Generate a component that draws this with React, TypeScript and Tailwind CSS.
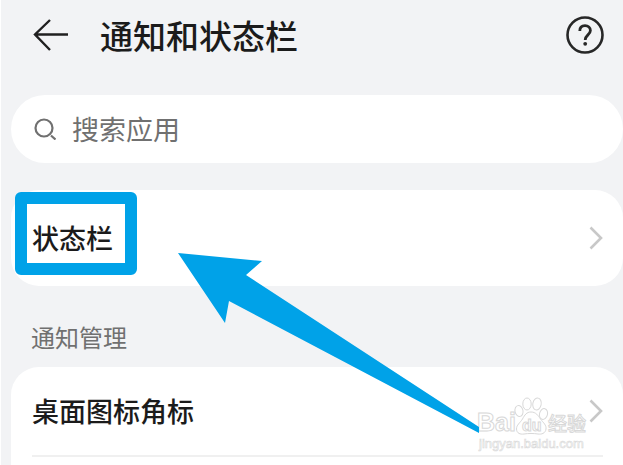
import { useState } from "react";

const rowClass = "flex w-full items-center justify-between text-left text-[27px] leading-9 font-medium text-[#1b1b1b]";

function Chevron() {
  return (
    <svg className="h-6 w-3.5 shrink-0" viewBox="0 0 14 24" fill="none" stroke="#c8c8c8" strokeWidth="2.6" aria-hidden="true">
      <path d="M1.5 1.5 12 12 1.5 22.5" />
    </svg>
  );
}

function Watermark() {
  return (
    <svg
      className="pointer-events-none absolute top-[396px] right-8 h-14 w-[115px] font-['Liberation_Sans','Noto_Sans_CJK_SC',sans-serif]"
      viewBox="0 0 115 56"
      fill="#ffffff"
      stroke="#d8d8d8"
      strokeWidth="1"
      aria-label="Baidu"
    >
      <text x="1" y="35" fontSize="25" fontWeight="700">Bai</text>
      <ellipse cx="43" cy="15" rx="4" ry="5.5" transform="rotate(-12 43 15)" />
      <ellipse cx="51" cy="8" rx="4.2" ry="6" />
      <ellipse cx="61" cy="8" rx="4.2" ry="6" transform="rotate(12 61 8)" />
      <ellipse cx="67.5" cy="18" rx="4" ry="5.5" transform="rotate(14 67.5 18)" />
      <path d="M55 16c5 0 7 3.500 9.500 7 3 4 6 6 5.500 10-.6 4.500-4.500 5.500-8 5-4.500-.7-9.500-.7-14 0-3.500.5-7.400-.5-7.500-5-.1-4 3.500-6 6-10 2.200-4 4-7 8.500-7Z" />
      <text x="46" y="35" fontSize="16" fontWeight="700">du</text>
      <text x="72" y="35" fontSize="19" fontWeight="500">经验</text>
      <text x="3" y="52" fontSize="13" strokeWidth="0.6">jingyan.baidu.com</text>
    </svg>
  );
}

export default function App() {
  const [query, setQuery] = useState("");

  return (
    <div className="relative flex min-h-screen flex-col overflow-hidden border-l border-white bg-[#f2f3f5] pl-2.5 font-['Noto_Sans_CJK_SC',sans-serif]">
      <header className="flex h-[70px] items-center pr-[18px] pl-[22px]">
        <button type="button" aria-label="返回" className="mr-[31px]">
          <svg className="h-8 w-9" viewBox="0 0 36 32" fill="none" stroke="#202020" strokeWidth="2.4" aria-hidden="true">
            <path d="M17 1 2 15.500 17 31M2 15.500h33" />
          </svg>
        </button>
        <h1 className="flex-1 text-[33px] leading-10 font-medium text-[#1b1b1b]">通知和状态栏</h1>
        <button type="button" aria-label="帮助">
          <svg className="size-10" viewBox="0 0 40 40" fill="none" stroke="#272727" strokeWidth="2.6" aria-hidden="true">
            <circle cx="20" cy="20" r="17.5" />
            <path d="M14.800 16c0-3.400 2.100-5.300 5.200-5.300 3.200 0 5.400 1.900 5.400 4.900 0 4.300-5.200 4.400-5.200 9.400" strokeWidth="2.8" />
            <circle cx="20.2" cy="28.8" r="1.900" fill="#272727" stroke="none" />
          </svg>
        </button>
      </header>

      <main className="flex flex-1 flex-col pt-[25px]">
        <label className="flex h-[68px] items-center gap-4 rounded-full bg-white pr-6 pl-[23px]">
          <svg className="size-[22px] shrink-0" viewBox="0 0 22 22" fill="none" stroke="#707070" strokeWidth="2.2" aria-hidden="true">
            <circle cx="10" cy="10" r="8.500" />
            <path d="m17 17.500 4.500 4" />
          </svg>
          <input
            type="text"
            aria-label="搜索应用"
            placeholder="搜索应用"
            value={query}
            onChange={(e) => setQuery(e.target.value)}
            className="h-10 min-w-0 flex-1 text-[27px] outline-none placeholder:text-[#707070]"
          />
        </label>

        <section className="relative mt-[27px] rounded-[28px] bg-white pr-5 pl-[21px]">
          <button type="button" className={`${rowClass} h-24`}>
            状态栏
            <Chevron />
          </button>
          {/* Highlight frame around the row label */}
          <div className="pointer-events-none absolute top-0.5 left-1 h-[83px] w-[122px] rounded-md border-12 border-[#00a2e8]" />
          {/* Pointer arrow */}
          <svg className="pointer-events-none absolute top-[63px] left-[167px] z-10 h-[181px] w-[302px]" viewBox="0 0 302 181" fill="#00a2e8" aria-hidden="true">
            <path d="M0 0 84 8 68 22 301 174V180L51 48 47 70Z" />
          </svg>
        </section>

        <h2 className="mt-[33px] mb-3 pl-5 text-2xl leading-9 text-[#707070]">通知管理</h2>

        <section className="flex-1 rounded-t-[28px] bg-white pr-5 pl-[21px]">
          <button type="button" className={`${rowClass} h-[88px]`}>
            桌面图标角标
            <Chevron />
          </button>
          <hr className="border-t-2 border-[#f0f0f0]" />
        </section>
      </main>

      <Watermark />
    </div>
  );
}
